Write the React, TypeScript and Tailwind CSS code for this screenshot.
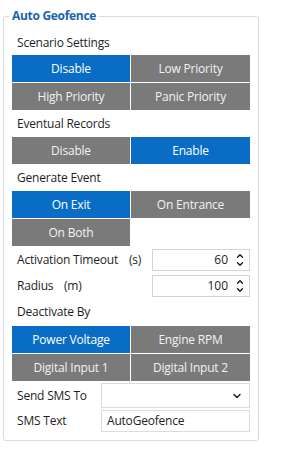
import { ChevronDown, ChevronUp } from 'lucide-react'

type Opt = { label: string; active?: boolean }

function Toggle({ options }: { options: Opt[] }) {
  return (
    <div className="grid grid-cols-[118px_119px] gap-px">
      {options.map((o) => (
        <div
          key={o.label}
          className={`flex h-[27px] items-center justify-center text-[12px] tracking-[-0.2px] ${
            o.active ? 'bg-[#0a6dc5] text-white' : 'bg-[#7a7a7a] text-[#f2f2f2]'
          }`}
        >
          {o.label}
        </div>
      ))}
    </div>
  )
}

function Label({ children, h = 'h-[27px]' }: { children: React.ReactNode; h?: string }) {
  return (
    <div className={`flex ${h} items-center pl-[5px] text-[12px] tracking-[-0.2px] text-[#1e1e1e]`}>{children}</div>
  )
}

function Spin({ value }: { value: string }) {
  return (
    <div className="flex h-[22px] w-[98px] items-center justify-end border border-[#d4d4d4] bg-white pr-[4px]">
      <span className="text-[12px] text-[#1e1e1e]">{value}</span>
      <div className="ml-[7px] flex flex-col text-[#222]">
        <ChevronUp size={10} strokeWidth={3.5} className="-mb-[2px]" />
        <ChevronDown size={10} strokeWidth={3.5} />
      </div>
    </div>
  )
}

export default function App() {
  return (
    <div
      className="h-[467px] w-[288px] bg-white pt-[16px] pl-[3px]"
      style={{ fontFamily: '"Open Sans", "Noto Sans", sans-serif' }}
    >
      <div className="relative h-[425px] w-[256px] rounded-[3px] border border-[#d6dbe0] px-[8px] pt-[14px]">
        <div className="absolute -top-[10px] left-[5px] bg-white px-[3px] text-[12px] font-bold leading-[18px] tracking-[-0.3px] text-[#1b63ae]">
          Auto Geofence
        </div>

        <Label h="h-[24px]">Scenario Settings</Label>
        <Toggle
          options={[
            { label: 'Disable', active: true },
            { label: 'Low Priority' },
            { label: 'High Priority' },
            { label: 'Panic Priority' },
          ]}
        />

        <Label>Eventual Records</Label>
        <Toggle options={[{ label: 'Disable' }, { label: 'Enable', active: true }]} />

        <Label>Generate Event</Label>
        <Toggle
          options={[{ label: 'On Exit', active: true }, { label: 'On Entrance' }, { label: 'On Both' }]}
        />

        <div className="mt-[3px] flex items-center justify-between">
          <div className="flex pl-[5px] text-[12px] tracking-[-0.2px] text-[#1e1e1e]">
            <span className="w-[112px]">Activation Timeout</span>
            <span>(s)</span>
          </div>
          <Spin value="60" />
        </div>
        <div className="mt-[4px] flex items-center justify-between">
          <div className="flex pl-[5px] text-[12px] tracking-[-0.2px] text-[#1e1e1e]">
            <span className="w-[47px]">Radius</span>
            <span>(m)</span>
          </div>
          <Spin value="100" />
        </div>

        <Label h="h-[29px]">Deactivate By</Label>
        <Toggle
          options={[
            { label: 'Power Voltage', active: true },
            { label: 'Engine RPM' },
            { label: 'Digital Input 1' },
            { label: 'Digital Input 2' },
          ]}
        />

        <div className="mt-[2px] flex items-center">
          <div className="w-[89px] pl-[5px] text-[12px] tracking-[-0.2px] text-[#1e1e1e]">Send SMS To</div>
          <div className="flex h-[25px] w-[149px] items-center justify-end border border-[#dcdcdc] bg-white pr-[6px]">
            <ChevronDown size={12} strokeWidth={3} className="text-[#222]" />
          </div>
        </div>
        <div className="mt-[2px] flex items-center">
          <div className="w-[89px] pl-[5px] text-[12px] tracking-[-0.2px] text-[#1e1e1e]">SMS Text</div>
          <div className="flex h-[22px] w-[149px] items-center border border-[#dcdcdc] bg-white pl-[5px] text-[12px] tracking-[-0.2px] text-[#1e1e1e]">
            AutoGeofence
          </div>
        </div>
      </div>
    </div>
  )
}
